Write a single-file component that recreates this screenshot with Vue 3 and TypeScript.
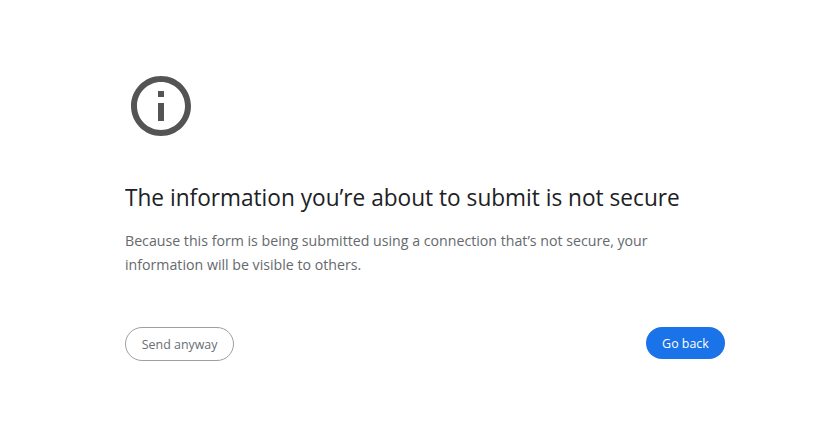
<script setup lang="ts">
const heading: string = 'The information you’re about to submit is not secure'
const message: string =
  'Because this form is being submitted using a connection that’s not secure, your information will be visible to others.'
</script>

<template>
  <main class="page">
    <svg class="icon" viewBox="0 0 24 24" aria-hidden="true">
      <path
        d="M11 17h2v-6h-2v6zm1-15C6.48 2 2 6.48 2 12s4.480 10 10 10 10-4.480 10-10S17.520 2 12 2zm0 18c-4.410 0-8-3.590-8-8s3.590-8 8-8 8 3.590 8 8-3.590 8-8 8zM11 9h2V7h-2v2z"
      />
    </svg>
    <h1>{{ heading }}</h1>
    <p>{{ message }}</p>
    <div class="actions">
      <button class="secondary" type="button"><span>Send anyway</span></button>
      <button class="primary" type="button"><span>Go back</span></button>
    </div>
  </main>
</template>

<style>
body {
  background: #fff;
}
</style>

<style scoped>
.page {
  box-sizing: border-box;
  width: 600px;
  margin-left: 125px;
  padding-top: 70px;
  font-family: 'Open Sans', 'Noto Sans', sans-serif;
  font-kerning: none;
}
.icon {
  display: block;
  width: 72px;
  height: 72px;
  fill: #545454;
}
h1 {
  margin: 40px 0 16px -0.5px;
  font-size: 24px;
  line-height: 30px;
  font-weight: 400;
  color: #202124;
  white-space: nowrap;
  transform: scaleX(0.943);
  transform-origin: left;
}
p {
  margin: 0 0 0 -0.5px;
  font-size: 15px;
  line-height: 24px;
  color: #65696e;
  transform: scaleX(0.945);
  transform-origin: left;
}
.actions {
  display: flex;
  justify-content: space-between;
  align-items: flex-start;
  margin-top: 51px;
}
button {
  box-sizing: border-box;
  padding: 0;
  border-radius: 20px;
  font: 400 13px/18px 'Open Sans', 'Noto Sans', sans-serif;
}
button span {
  display: inline-block;
  transform: scaleX(0.955);
}
.secondary {
  width: 109px;
  height: 34px;
  border: 1px solid #9aa0a6;
  background: #fff;
  color: #696e73;
}
.primary {
  width: 79px;
  height: 32px;
  border: 0;
  background: #1a73e8;
  color: #fff;
}
</style>
